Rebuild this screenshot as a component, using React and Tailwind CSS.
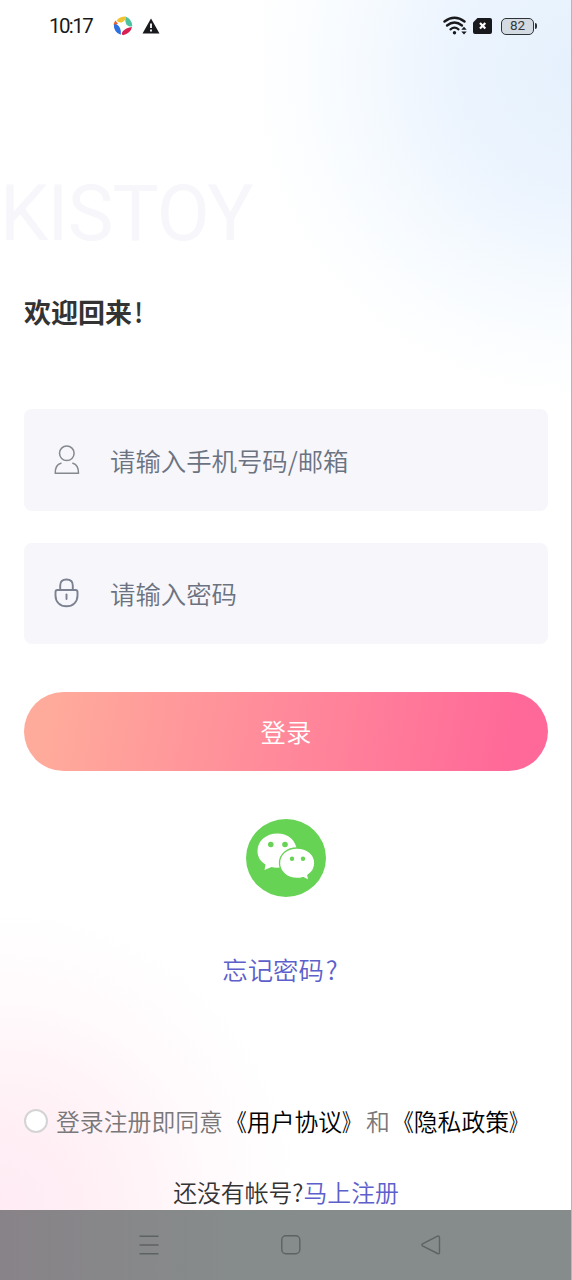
import { useState } from 'react';

function StatusBar() {
  return (
    <div className="flex h-[52px] items-center pl-[49px] pr-[34px] font-normal text-[#18191c]">
      <span className="w-[64px] font-[Roboto,sans-serif] text-[20.5px] leading-none tracking-[-1.6px]">10:17</span>
      <svg className="h-[20px] w-[20px]" viewBox="0 0 20 20">
        <path d="M3.500 4.500Q7 .3 13 .6Q12.500 5 8.500 6.500Q5.500 7 3.500 4.500Z" fill="#f1c232" />
        <path d="M13 .8Q19 3.500 19.300 10Q16 11.500 13.500 8.500Q11.500 5 13 .8Z" fill="#4cc3a0" />
        <path d="M19 11Q17.500 17.500 10 19.300Q7.500 18 10 15Q13.500 11.500 19 11Z" fill="#d91f52" />
        <path d="M.8 7.500Q4.500 7.500 7 12Q8.500 15.500 7.800 18.800Q.5 16.500 .8 7.500Z" fill="#2b6fe0" />
        <path d="M2.500 4.500Q1 6 .7 8.500L5 8Z" fill="#e8622c" />
      </svg>
      <svg className="ml-[9px] h-[17px] w-[18px]" viewBox="0 0 18 17">
        <path d="M9 .5L17.500 15.500H.5Z" fill="currentColor" />
        <path d="M9 5.500V10M9 11.500V13.500" stroke="#fff" strokeWidth="1.800" />
      </svg>

      <div className="ml-auto flex items-center">
        <svg className="h-[20px] w-[25px]" viewBox="0 0 25 20" fill="none" stroke="currentColor">
          <path d="M1.500 5.500Q11.500-2 21.500 5.500" strokeWidth="2.400" strokeLinecap="round" />
          <path d="M4 9.500Q11.500 3.500 19 9.500" strokeWidth="2.300" strokeLinecap="round" />
          <path d="M7.500 13.300Q11.500 10 15.500 13.300" strokeWidth="2.200" strokeLinecap="round" />
          <circle cx="11.500" cy="16.800" r="1.700" fill="currentColor" stroke="none" />
          <path d="M18.300 13.800L21 10.800L23.700 13.800ZM18.300 15.500L21 18.500L23.700 15.500Z" fill="currentColor" stroke="none" />
        </svg>
        <svg className="ml-[5px] h-[16px] w-[19px]" viewBox="0 0 19 16">
          <path d="M4.500 0H17Q19 0 19 2V14Q19 16 17 16H2Q0 16 0 14V4.500Z" fill="currentColor" />
          <path d="M7 5L12.300 10.500M12.300 5L7 10.500" stroke="#fff" strokeWidth="2.200" />
        </svg>
        <div className="ml-[9px] flex h-[17px] w-[33px] items-center justify-center rounded-[5px] border-[1.5px] border-[#2e3338] bg-[#d3dae2] font-[Roboto,sans-serif] text-[13.5px] leading-none text-[#33383d]">
          82
        </div>
        <div className="ml-px h-[6px] w-[2px] rounded-r bg-[#2e3338]" />
      </div>
    </div>
  );
}

function UserIcon() {
  return (
    <svg className="h-[30px] w-[26px]" viewBox="0 0 26 30" fill="none" stroke="#85888f" strokeWidth="1.500">
      <circle cx="12.800" cy="8.300" r="7.300" />
      <path d="M7 18.200C3.500 19 1.200 22.500 1.200 28.200H24.500C24.500 22.500 22 19 18.800 18.200" strokeLinejoin="round" strokeLinecap="round" />
    </svg>
  );
}

function LockIcon() {
  return (
    <svg className="h-[30px] w-[26px]" viewBox="0 0 26 30" fill="none" stroke="#7b8190" strokeWidth="1.900">
      <path d="M6.200 12V7.500Q6.200 1.500 12.500 1.500Q18.800 1.500 18.800 7.500V12" />
      <path d="M3.500 12H21.500Q23.500 12 23.500 14V17.500C23.500 24 19 28.300 12.500 28.300S1.500 24 1.500 17.500V14Q1.500 12 3.500 12Z" />
      <path d="M12.500 16.500V21" strokeLinecap="round" />
    </svg>
  );
}

function WechatIcon() {
  return (
    <svg className="h-[78px] w-[80px]" viewBox="0 0 80 78">
      <ellipse cx="40" cy="39" rx="40" ry="39" fill="#67d355" />
      <path d="M31.500 14.500C20 14.500 11.500 22 11.500 32C11.500 38 14.500 42.500 19.500 45.500L18.500 51L25.500 48Q29 49 34 48.500C42 48 51 41 51 31.500C50 21.500 42.500 14.500 31.500 14.500Z" fill="#fff" />
      <path d="M51 29C41 29 33.500 35.500 33.500 44S41 59.500 51 59.500Q54 59.500 57 58.500L63 61.500L61.800 56.300C66 53.500 68.800 49.500 68.800 44C68.800 35.500 61 29 51 29Z" fill="#fff" stroke="#67d355" strokeWidth="1.300" />
      <g fill="#67d355">
        <circle cx="24.800" cy="25.500" r="2.800" />
        <circle cx="39" cy="25.500" r="2.800" />
        <circle cx="46" cy="39.800" r="2.200" />
        <circle cx="57" cy="39.800" r="2.200" />
      </g>
    </svg>
  );
}

function Field({ icon, ...props }) {
  return (
    <label className="flex h-[101.5px] items-center rounded-lg bg-[#f6f6fb] pl-[30px]">
      {icon}
      <input
        className="ml-[30px] min-w-0 flex-1 bg-transparent text-[25.4px] text-[#6b7280] outline-none placeholder:text-[#6b7280]"
        {...props}
      />
    </label>
  );
}

function DocLink({ children, href }) {
  return (
    <a href={href} className="flex text-black">
      <span className="origin-right scale-x-85">《</span>
      {children}
      <span className="origin-left scale-x-75">》</span>
    </a>
  );
}

function NavBar() {
  return (
    <div className="flex h-[70px] shrink-0 items-center bg-linear-to-r from-[#888388] to-[#868b8b] to-40% pl-[139px] text-[#5d6263]">
      <svg className="h-[20px] w-[20px]" viewBox="0 0 20 20" stroke="currentColor" strokeWidth="1.400">
        <path d="M.5 1.200H19.500M.5 10H19.500M.5 18.700H19.500" />
      </svg>
      <svg className="ml-[122px] h-[20px] w-[20px]" viewBox="0 0 20 20" fill="none" stroke="currentColor" strokeWidth="1.400">
        <rect x=".8" y=".8" width="18" height="18" rx="4" />
      </svg>
      <svg className="ml-[120px] h-[20px] w-[20px]" viewBox="0 0 20 20" fill="none" stroke="currentColor" strokeWidth="1.400">
        <path d="M1.500 8.800L16.500 1.200Q18.500 .6 18.500 2.500V17.500Q18.500 19.300 16.500 18.500L1.500 11Q.3 10 1.500 8.800Z" />
      </svg>
    </div>
  );
}

export default function App() {
  const [agreed, setAgreed] = useState(false);

  return (
    <div className="flex h-[1280px] w-[572px] flex-col overflow-hidden border-r border-[#b4b6ba] bg-white bg-[radial-gradient(circle_at_580px_70px,#e5f1fd_0,#ecf4fe_130px,#f7fbff_230px,#ffffff_330px,transparent_340px),radial-gradient(circle_at_0px_1210px,#ffebf4_0,#fff1f6_110px,#fffafc_210px,#ffffff_300px)] font-['Noto_Sans_CJK_SC',sans-serif] font-[350]">
      <StatusBar />

      <h1 className="mt-[124px] font-[Roboto,sans-serif] text-[77px] leading-[77px] font-normal tracking-[-0.8px] text-[#f6f6fb]">
        KISTOY
      </h1>
      <h2 className="mt-[39px] pl-6 text-[27px] leading-[40px] font-bold text-[#333]">
        欢迎回来<span className="ml-[2px] font-medium">!</span>
      </h2>

      <div className="mt-[77px] flex flex-col gap-[32px] pl-6 pr-[23px]">
        <Field icon={<UserIcon />} type="text" placeholder="请输入手机号码/邮箱" />
        <Field icon={<LockIcon />} type="password" placeholder="请输入密码" />
      </div>

      <div className="mt-[48px] flex flex-col items-center pl-6 pr-[23px]">
        <button className="h-[79px] w-full rounded-full bg-[linear-gradient(100deg,#ffab9b_5%,#ff6999_92%)] text-[25.4px] text-white">
          登录
        </button>
        <button className="mt-[48px]">
          <WechatIcon />
        </button>
        <a href="#forgot" className="mt-[53px] mr-[12px] text-[25.4px] leading-[38px] text-[#5d5fcb]">
          忘记密码<span className="ml-[2px]">?</span>
        </a>
      </div>

      <div className="mt-[115px] flex items-center pl-6 text-[23.85px] leading-[36px] whitespace-nowrap text-[#7a7779]">
        <button
          aria-label="同意"
          onClick={() => setAgreed(!agreed)}
          className={`mr-[8px] h-[24px] w-[24px] shrink-0 rounded-full border-2 border-[#d4d4d6] ${agreed ? 'bg-[#ff6596]' : 'bg-white'}`}
        />
        <span>登录注册即同意</span>
        <DocLink href="#terms">用户协议</DocLink>
        <span>和</span>
        <DocLink href="#privacy">隐私政策</DocLink>
      </div>

      <div className="mt-[35px] pl-px text-center text-[23.85px] leading-[36px] text-[#333]">
        还没有帐号?<a href="#register" className="text-[#5d5fcb]">马上注册</a>
      </div>

      <NavBar />
    </div>
  );
}
